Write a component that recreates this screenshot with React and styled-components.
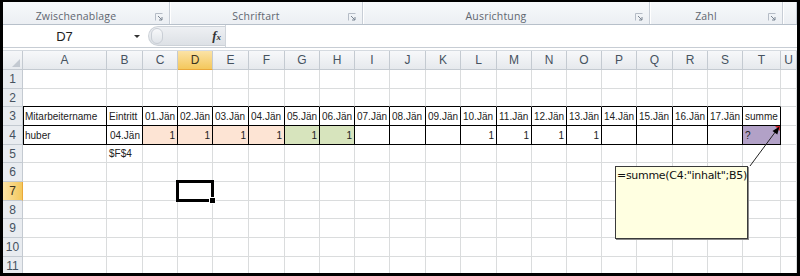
import styled, { createGlobalStyle } from 'styled-components';

const GlobalStyle = createGlobalStyle`
  html, body {
    margin: 0;
    padding: 0;
    background: #000;
    overflow: hidden;
  }
`;

const columns = [
  ['A', 84], ['B', 36], ['C', 35], ['D', 35], ['E', 36], ['F', 36], ['G', 35],
  ['H', 35], ['I', 35], ['J', 36], ['K', 35], ['L', 36], ['M', 35], ['N', 35],
  ['O', 35], ['P', 35], ['Q', 36], ['R', 35], ['S', 35], ['T', 38], ['U', 16],
];
const rowHeights = [19, 18, 19, 19, 18, 19, 19, 18, 19, 19, 18];
const tableCols = columns.slice(0, 20).map((c) => c[0]);

const PEACH = '#fde4d4';
const GREEN = '#d7e4bd';
const PURPLE = '#b2a1c7';

function buildCells() {
  const cells = {
    A3: { text: 'Mitarbeitername' },
    B3: { text: 'Eintritt' },
    T3: { text: 'summe' },
    A4: { text: 'huber' },
    B4: { text: '04.Jän', align: 'right' },
    T4: { text: '?', fill: PURPLE, note: true },
    B5: { text: '$F$4' },
  };
  tableCols.slice(2, 19).forEach((k, i) => {
    cells[k + '3'] = { text: `${String(i + 1).padStart(2, '0')}.Jän` };
  });
  ['C', 'D', 'E', 'F'].forEach((k) => (cells[k + '4'] = { text: '1', align: 'right', fill: PEACH }));
  ['G', 'H'].forEach((k) => (cells[k + '4'] = { text: '1', align: 'right', fill: GREEN }));
  ['L', 'M', 'N', 'O'].forEach((k) => (cells[k + '4'] = { text: '1', align: 'right' }));
  return cells;
}

const cells = buildCells();

function Launcher() {
  return (
    <LauncherBox>
      <svg width="8" height="8" viewBox="0 0 8 8">
        <path d="M0.5 7.5 V0.5 H7.5" fill="none" stroke="#b5bcc6" />
        <path d="M3 3 L7 7 M7 4 V7 H4" fill="none" stroke="#7b8592" strokeWidth="1" />
      </svg>
    </LauncherBox>
  );
}

function App() {
  const active = { col: 'D', row: 7 };

  return (
    <>
      <GlobalStyle />
      <Frame>
        <Ribbon>
          <Group $w={167}><GroupLabel>Zwischenablage</GroupLabel><Launcher /></Group>
          <Group $w={193}><GroupLabel>Schriftart</GroupLabel><Launcher /></Group>
          <Group $w={287}><GroupLabel>Ausrichtung</GroupLabel><Launcher /></Group>
          <Group $w={133}><GroupLabel>Zahl</GroupLabel><Launcher /></Group>
          <Group $w={14} />
        </Ribbon>

        <FormulaBar>
          <NameBox>
            <span>D7</span>
            <DropArrow />
          </NameBox>
          <FxArea>
            <Grip />
            <Fx>f<small>x</small></Fx>
          </FxArea>
          <FormulaInput />
        </FormulaBar>

        <Sheet
          $cols={`20px ${columns.map((c) => c[1] + 'px').join(' ')}`}
          $rows={`19px ${rowHeights.map((h) => h + 'px').join(' ')}`}
        >
          <Corner />
          {columns.map(([k]) => (
            <ColHeader key={k} $active={k === active.col}>{k}</ColHeader>
          ))}

          {rowHeights.map((_, ri) => {
            const row = ri + 1;
            return [
              <RowHeader key={'h' + row} $active={row === active.row}>{row}</RowHeader>,
              ...columns.map(([k], ci) => {
                const cell = cells[k + row] || {};
                const inTable = ci < 20 && (row === 3 || row === 4);
                const aboveTable = ci < 20 && row === 2;
                return (
                  <Cell
                    key={k + row}
                    $fill={cell.fill}
                    $align={cell.align}
                    $boxed={inTable}
                    $edgeBottom={aboveTable}
                    $edgeLeft={inTable && ci === 0}
                  >
                    {cell.text}
                    {cell.note && <NoteMark />}
                    {k === active.col && row === active.row && (
                      <Selection><FillHandle /></Selection>
                    )}
                  </Cell>
                );
              }),
            ];
          })}
        </Sheet>

        <Callout viewBox="0 0 794 271" width="794" height="271">
          <line x1="747" y1="164" x2="773" y2="129" stroke="#222" strokeWidth="1" />
          <polygon points="776.5,124.5 774.3,132.6 769.5,129" fill="#000" />
        </Callout>
        <Comment>=summe(C4:"inhalt";B5)</Comment>
      </Frame>
    </>
  );
}

const Frame = styled.div`
  position: relative;
  width: 794px;
  height: 271px;
  border-style: solid;
  border-color: #000;
  border-width: 2px 3px 3px 3px;
  background: #fff;
  overflow: hidden;
  font-family: "Liberation Sans", Arial, sans-serif;
`;

const Ribbon = styled.div`
  display: flex;
  height: 22px;
  background: linear-gradient(#f7f9fb, #eceff3);
  border-bottom: 1px solid #b7c0ca;
`;

const Group = styled.div`
  display: flex;
  align-items: flex-end;
  width: ${(p) => p.$w}px;
  flex: none;
  border-right: 1px solid #c8ced6;
  box-shadow: 1px 0 0 #fff;
  padding-bottom: 1px;
  box-sizing: border-box;
`;

const GroupLabel = styled.div`
  flex: 1;
  text-align: center;
  font-family: "Open Sans", "Liberation Sans", sans-serif;
  font-size: 10.5px;
  line-height: 13px;
  color: #5f6670;
  letter-spacing: 0.2px;
`;

const LauncherBox = styled.div`
  width: 20px;
  display: flex;
  justify-content: center;
  padding-bottom: 2px;
`;

const FormulaBar = styled.div`
  display: flex;
  height: 22px;
  background: #fff;
  border-bottom: 1px solid #c7cdd4;
`;

const NameBox = styled.div`
  width: 142px;
  flex: none;
  display: flex;
  align-items: center;
  position: relative;
  font-size: 13px;
  color: #1e1e1e;

  span {
    flex: 1;
    text-align: center;
    padding-right: 8px;
  }
`;

const DropArrow = styled.div`
  width: 0;
  height: 0;
  margin-right: 5px;
  border-left: 3px solid transparent;
  border-right: 3px solid transparent;
  border-top: 3px solid #333;
`;

const FxArea = styled.div`
  width: 77px;
  flex: none;
  margin: 1px 0 1px 3px;
  display: flex;
  align-items: center;
  justify-content: space-between;
  border-radius: 10px 0 0 10px;
  background: linear-gradient(#eef0f3, #dde1e6);
  border: 1px solid #cdd2d8;
  border-right: none;
  box-sizing: border-box;
`;

const Grip = styled.div`
  width: 12px;
  height: 16px;
  margin-left: 2px;
  border-radius: 8px;
  background: linear-gradient(#f7f8fa, #e0e4e9);
  border: 1px solid #c9ced5;
  box-sizing: border-box;
`;

const Fx = styled.div`
  font-family: "Liberation Serif", serif;
  font-style: italic;
  font-weight: bold;
  font-size: 13px;
  color: #333;
  margin-right: 4px;

  small {
    font-size: 9px;
  }
`;

const FormulaInput = styled.div`
  flex: 1;
  border-left: 1px solid #d0d5db;
  background: #fff;
`;

const Sheet = styled.div`
  display: grid;
  grid-template-columns: ${(p) => p.$cols};
  grid-template-rows: ${(p) => p.$rows};
  margin-top: 2px;
  border-top: 1px solid #d5dae0;
  overflow: hidden;
`;

const Corner = styled.div`
  position: relative;
  background: linear-gradient(#f6f7f9, #e7eaee);
  border-right: 1px solid #c4cad1;
  border-bottom: 1px solid #c4cad1;

  &::after {
    content: '';
    position: absolute;
    right: 2px;
    bottom: 2px;
    border-left: 8px solid transparent;
    border-bottom: 8px solid #c3c9d1;
  }
`;

const ColHeader = styled.div`
  display: flex;
  align-items: center;
  justify-content: center;
  font-size: 12px;
  color: ${(p) => (p.$active ? '#3a3320' : '#46525f')};
  background: ${(p) => (p.$active
    ? 'linear-gradient(#fbe3a6, #f4c85c)'
    : 'linear-gradient(#f7f8fa, #e6e9ed)')};
  border-right: 1px solid #c4cad1;
  border-bottom: 1px solid ${(p) => (p.$active ? '#e9a83a' : '#c4cad1')};
`;

const RowHeader = styled.div`
  display: flex;
  align-items: center;
  justify-content: center;
  font-size: 12px;
  color: ${(p) => (p.$active ? '#3a3320' : '#46525f')};
  background: ${(p) => (p.$active
    ? 'linear-gradient(90deg, #fbe3a6, #f4c85c)'
    : '#e9ecf0')};
  border-right: 1px solid ${(p) => (p.$active ? '#e9a83a' : '#c4cad1')};
  border-bottom: 1px solid #c4cad1;
`;

const Cell = styled.div`
  position: relative;
  display: flex;
  align-items: flex-end;
  justify-content: ${(p) => (p.$align === 'right' ? 'flex-end' : 'flex-start')};
  padding: 0 2px 2px 2px;
  font-size: 10px;
  line-height: 12px;
  color: #222;
  white-space: nowrap;
  background: ${(p) => p.$fill || '#fff'};
  border-right: 1px solid ${(p) => (p.$boxed ? '#000' : '#dadcdd')};
  border-bottom: 1px solid ${(p) => (p.$boxed || p.$edgeBottom ? '#000' : '#dadcdd')};
  box-shadow: ${(p) => (p.$edgeLeft ? 'inset 1px 0 0 #000' : 'none')};
  min-width: 0;
`;

const NoteMark = styled.div`
  position: absolute;
  top: 0;
  right: 0;
  border-left: 5px solid transparent;
  border-top: 5px solid #d0262c;
`;

const Selection = styled.div`
  position: absolute;
  z-index: 2;
  top: -2px;
  left: -2px;
  right: -2px;
  bottom: -2px;
  border: 3px solid #000;
  pointer-events: none;
`;

const FillHandle = styled.div`
  position: absolute;
  right: -5px;
  bottom: -5px;
  width: 5px;
  height: 5px;
  background: #000;
  border: 1px solid #fff;
`;

const Callout = styled.svg`
  position: absolute;
  left: 0;
  top: 0;
  pointer-events: none;
`;

const Comment = styled.div`
  position: absolute;
  left: 612px;
  top: 164px;
  width: 133px;
  height: 73px;
  box-sizing: border-box;
  padding: 2px 1px;
  background: #ffffe1;
  border: 1px solid #3a3a3a;
  box-shadow: 1px 1px 0 #8a8a8a;
  font-family: "DejaVu Sans", "Liberation Sans", sans-serif;
  font-size: 11px;
  letter-spacing: -0.3px;
  line-height: 13px;
  color: #111;
  white-space: nowrap;
`;

export default App;
